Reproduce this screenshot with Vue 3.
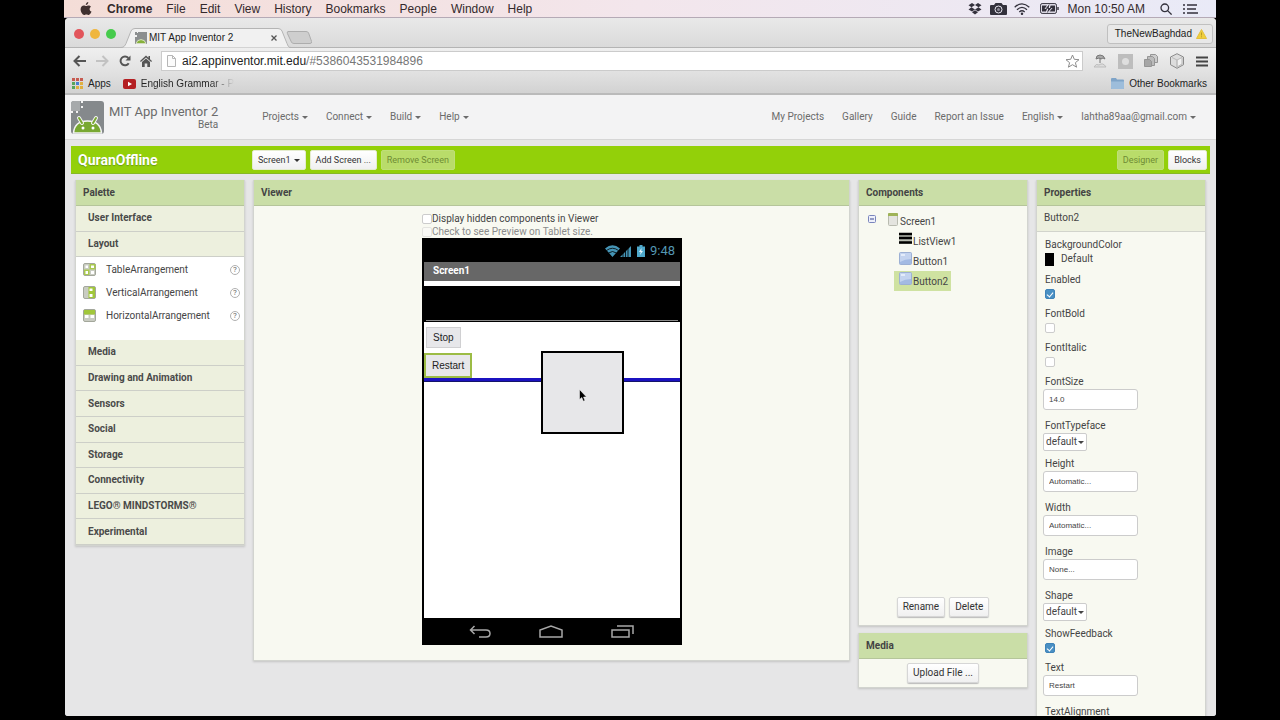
<script setup>
import { ref } from 'vue'

const menus = ['File', 'Edit', 'View', 'History', 'Bookmarks', 'People', 'Window', 'Help']
const leftNav = ['Projects', 'Connect', 'Build', 'Help']
const rightNav = [
  { label: 'My Projects' },
  { label: 'Gallery' },
  { label: 'Guide' },
  { label: 'Report an Issue' },
  { label: 'English', menu: true },
  { label: 'lahtha89aa@gmail.com', menu: true },
]
const paletteTop = ['User Interface', 'Layout']
const paletteBottom = ['Media', 'Drawing and Animation', 'Sensors', 'Social', 'Storage', 'Connectivity', 'LEGO® MINDSTORMS®', 'Experimental']
const layoutItems = [
  { name: 'TableArrangement', kind: 'table' },
  { name: 'VerticalArrangement', kind: 'vertical' },
  { name: 'HorizontalArrangement', kind: 'horizontal' },
]
const children = [
  { name: 'ListView1', kind: 'list' },
  { name: 'Button1', kind: 'button' },
  { name: 'Button2', kind: 'button', selected: true },
]
const properties = ref([
  { name: 'Enabled', type: 'check', value: true },
  { name: 'FontBold', type: 'check', value: false },
  { name: 'FontItalic', type: 'check', value: false },
  { name: 'FontSize', type: 'text', value: '14.0' },
  { name: 'FontTypeface', type: 'select', value: 'default' },
  { name: 'Height', type: 'text', value: 'Automatic...' },
  { name: 'Width', type: 'text', value: 'Automatic...' },
  { name: 'Image', type: 'text', value: 'None...' },
  { name: 'Shape', type: 'select', value: 'default' },
  { name: 'ShowFeedback', type: 'check', value: true },
  { name: 'Text', type: 'text', value: 'Restart' },
  { name: 'TextAlignment', type: 'select', value: 'center' },
])
const showHidden = ref(false)
const tabletPreview = ref(false)
const appColors = ['#c65a50', '#c65a50', '#c65a50', '#58a55c', '#4a7fd0', '#e0b040', '#58a55c', '#e0b040', '#e0b040']
</script>

<template>
  <div class="screen">
    <header class="menubar">
      <svg class="apple" width="12" height="14" viewBox="0 0 12 14"><path fill="#40302f" d="M8.3 0c.1 1.500-1 2.900-2.500 3C5.700 1.600 6.900.2 8.300 0zM8.500 3.400c.9 0 1.900.5 2.500 1.300-2 1.200-1.800 4 .5 4.900-.5 1.500-1.700 3.400-2.800 3.400-.9 0-1.200-.5-2.300-.5s-1.400.5-2.300.5C2.500 13 .6 9.900.6 7.300c0-2.500 1.600-3.900 3.200-3.900 1 0 1.800.6 2.500.6.600 0 1.300-.6 2.200-.6z"/></svg>
      <nav class="mac-menus">
        <strong>Chrome</strong>
        <span v-for="m in menus" :key="m">{{ m }}</span>
      </nav>
      <div class="status">
        <svg width="14" height="12" viewBox="0 0 14 12" fill="#33313c"><path d="M4 0l3 2-3.500 2.200L.5 2.200zM10 0l3.500 2.200-3 2L7 2zM.5 6.400l3-2.200L7 6.400 4 8.500zM7 6.400l3.500-2.200 3 2.200-3.500 2.100zM4 9.200L7 7.200l3 2L7 11.500z"/></svg>
        <svg class="camera" width="17" height="12" viewBox="0 0 17 12"><path fill="#33313c" d="M1 2h3l1.500-2h6L13 2h3q1 0 1 1v8q0 1-1 1H1q-1 0-1-1V3q0-1 1-1z"/><circle cx="8.500" cy="6.500" r="3.500" fill="none" stroke="#e8e6f0"/><circle cx="8.500" cy="6.500" r="1.500" fill="#8e8c98"/></svg>
        <svg class="wifi" width="16" height="12" viewBox="0 0 16 12" fill="none" stroke="#33313c" stroke-width="1.300"><path d="M.7 4.200Q8-2.500 15.300 4.200M3 6.700q5-4.600 10 0M5.300 9q2.700-2.400 5.400 0"/><circle cx="8" cy="10.800" r=".6" fill="#33313c"/></svg>
        <svg class="battery" width="19" height="11" viewBox="0 0 19 11"><rect x=".6" y=".6" width="15.800" height="9.800" rx="1.500" fill="none" stroke="#33313c"/><path fill="#33313c" d="M17.300 4h1.400v3h-1.400zM2 2.500h5L4.500 6H7L6 8.500H2zM10.500 2.500H15v6H9.500L12.500 5H10zM9.500 1L5.500 5.700h2.700L7 10l4.500-5H8.700z"/></svg>
        <span class="clock">Mon 10:50 AM</span>
        <svg class="find" width="12" height="12" viewBox="0 0 12 12" fill="none" stroke="#33313c" stroke-width="1.300"><circle cx="4.800" cy="4.800" r="3.800"/><path d="M7.600 7.600l4 4"/></svg>
        <svg width="15" height="10" viewBox="0 0 15 10" stroke="#33313c" stroke-width="1.500"><path d="M0 1h2M4 1h10M0 5h2M4 5h9M0 9h2M4 9h11"/></svg>
      </div>
    </header>

    <div class="browser">
      <div class="tabstrip">
        <div class="lights"><i class="red"></i><i class="yellow"></i><i class="green"></i></div>
        <div class="tab">
          <svg class="tab-shape" width="170" height="20" viewBox="0 0 170 20"><path d="M0 19.500c3 0 4-2 5-4L10 3q1-2.500 4-2.500h143q3 0 4 2.500l5 12.500c1 2 1 4 4 4" fill="#f1f1f1" stroke="#b4b4b4"/></svg>
          <svg class="favicon" width="12" height="12" viewBox="0 0 12 12"><path fill="#8c8f90" d="M0 0h2v1h1V0h9v12H0V5h2V3H0z"/><path fill="#86b13a" stroke="#eef2e2" stroke-width=".8" d="M1 11.600q1-4 5-4t5 4z"/></svg>
          <span>MIT App Inventor 2</span>
          <button class="tab-close" aria-label="Close tab"><svg width="6" height="6" viewBox="0 0 6 6"><path d="M.5.5l5 5M5.500.5l-5 5" stroke="#555" stroke-width="1.300"/></svg></button>
        </div>
        <svg class="newtab" width="26" height="13" viewBox="0 0 26 13"><path d="M2 .5h18q2 0 2.600 1.500l3 8.500q.4 2-1.600 2H8q-2 0-2.600-1.500l-4-8.500Q.8.500 2 .5z" fill="#cecece" stroke="#adadad"/></svg>
        <button class="profile">TheNewBaghdad
          <svg width="11" height="10" viewBox="0 0 11 10"><path d="M5.500.5l5 9H.5z" fill="#f0cf3c" stroke="#e3bf3d"/><path d="M5.500 3.500v3M5.500 7.300v1" stroke="#b99a24"/></svg>
        </button>
      </div>

      <div class="toolbar">
        <button aria-label="Back"><svg width="13" height="12" viewBox="0 0 13 12" fill="none" stroke="#555" stroke-width="2"><path d="M13 6H2M6.500 1L1.500 6l5 5"/></svg></button>
        <button aria-label="Forward"><svg width="13" height="12" viewBox="0 0 13 12" fill="none" stroke="#c2c2c2" stroke-width="2"><path d="M0 6h11M6.500 1l5 5-5 5"/></svg></button>
        <button aria-label="Reload"><svg width="12" height="12" viewBox="0 0 12 12"><path d="M9.700 8.200A4.400 4.400 0 1 1 9.300 3" fill="none" stroke="#555" stroke-width="2"/><path fill="#555" d="M11.500.5v5h-5z"/></svg></button>
        <button aria-label="Home"><svg width="12" height="12" viewBox="0 0 12 12" fill="#555"><path d="M6 .5l2.500 2.300V1H10v3.200L12 6l-.8 1-5.200-4.600L.8 7 0 6zM2 7l4-3.500L10 7v5H7.300V8.500H4.700V12H2z"/></svg></button>
        <div class="omnibox">
          <svg width="9" height="12" viewBox="0 0 9 12"><path d="M.5.5h5l3 3v8h-8zM5.500.5v3h3" fill="#fbfbfb" stroke="#b6b6b6"/></svg>
          <span class="url" role="textbox" aria-label="Address"><b>ai2.appinventor.mit.edu</b>/#5386043531984896</span>
          <svg width="15" height="14" viewBox="0 0 15 14"><path d="M7.500 1l1.800 4.300 4.700.4-3.600 3 1.200 4.500-4.100-2.500-4.100 2.500 1.200-4.500L1 5.700l4.700-.4z" fill="#fff" stroke="#8c8c8c"/></svg>
        </div>
        <div class="extensions">
          <svg width="14" height="14" viewBox="0 0 14 14"><path d="M3 5q0-4 4-4t5 4l-2-1-2 1-2-1zM7 4v5" fill="#aaa" stroke="#777"/><path d="M1 13q2-4 5-2 4-3 7 2z" fill="#ddd" stroke="#bbb"/></svg>
          <svg width="15" height="15" viewBox="0 0 15 15"><path fill="#bdbdbd" d="M0 0h15v15H0z"/><circle cx="7.500" cy="7.500" r="3.500" fill="#dedede"/></svg>
          <svg width="14" height="14" viewBox="0 0 14 14" stroke="#959595"><path fill="#ccc" d="M6.500.5h5l2 2v6h-7z"/><path fill="#bbb" d="M3.500 2.500h5l2 2v7h-7z"/><path fill="#a6a6a6" d="M.5 5.500h5l2 2v5h-7z"/></svg>
          <svg width="16" height="16" viewBox="0 0 16 16" stroke="#8a8a8a"><path fill="#ddd" d="M8 .7l6.500 3.300v7.700L8 15.300l-6.500-3.600V4z"/><path fill="#f2f2f2" d="M8 7l5-2.500v6.500l-5 3z" stroke="#bbb"/><path d="M3 4.500L8 7v7" fill="none" stroke="#bbb"/></svg>
          <svg width="12" height="11" viewBox="0 0 12 11" stroke="#444" stroke-width="2"><path d="M0 1.500h12M0 5.500h12M0 9.500h12"/></svg>
        </div>
      </div>

      <div class="bookmarks">
        <svg width="11" height="11" viewBox="0 0 11 11"><rect v-for="(c, i) in appColors" :key="i" :x="(i % 3) * 4" :y="Math.floor(i / 3) * 4" width="3" height="3" :fill="c"/></svg>
        <span>Apps</span>
        <svg class="yt" width="13" height="10" viewBox="0 0 13 10"><rect width="13" height="10" rx="2" fill="#b41f22"/><path fill="#fff" d="M5 2.700l4 2.300-4 2.300z"/></svg>
        <span class="fade">English Grammar - P</span>
        <svg class="folder" width="13" height="11" viewBox="0 0 13 11"><path fill="#7fa4c8" d="M0 1q0-1 1-1h4l1 1.500h6q1 0 1 1V10q0 1-1 1H1q-1 0-1-1z"/><path fill="#9dbddb" d="M0 3.500h13V10q0 1-1 1H1q-1 0-1-1z"/></svg>
        <span>Other Bookmarks</span>
      </div>

      <div class="page">
        <header class="site-head">
          <svg width="33" height="33" viewBox="0 0 33 33"><rect width="33" height="33" rx="3" fill="#85898c"/><path d="M0 3q0-3 3-3h6v10H0z" fill="#a6a9ab"/><path d="M11 0v2M11 5v2M0 11h2M5 11h2" stroke="#f3f3f3" stroke-width="2" fill="none"/><path d="M2.500 32q1-12 14-12t14 12z" fill="#79a832" stroke="#f3f3f3" stroke-width="1.500"/><path d="M8 17l3 5M25 17l-3 5" stroke="#f3f3f3" stroke-width="4" stroke-linecap="round"/><path d="M8 17l3 5M25 17l-3 5" stroke="#79a832" stroke-width="2" stroke-linecap="round"/><circle cx="12" cy="27" r="1.500" fill="#fff"/><circle cx="22" cy="27" r="1.500" fill="#fff"/></svg>
          <div class="brand"><span class="brand-name">MIT App Inventor 2</span><span>Beta</span></div>
          <nav class="nav left">
            <button v-for="n in leftNav" :key="n">{{ n }}<i class="caret"></i></button>
          </nav>
          <nav class="nav right">
            <template v-for="n in rightNav" :key="n.label">
              <button v-if="n.menu">{{ n.label }}<i class="caret"></i></button>
              <a v-else href="#">{{ n.label }}</a>
            </template>
          </nav>
        </header>

        <div class="project-bar">
          <h1>QuranOffline</h1>
          <button class="btn">Screen1<i class="caret"></i></button>
          <button class="btn">Add Screen ...</button>
          <button class="btn off" disabled>Remove Screen</button>
          <button class="btn off designer" disabled>Designer</button>
          <button class="btn">Blocks</button>
        </div>

        <main class="columns">
          <section class="panel">
            <h2>Palette</h2>
            <div class="group two">
              <button v-for="p in paletteTop" :key="p">{{ p }}</button>
            </div>
            <ul class="items">
              <li v-for="it in layoutItems" :key="it.name">
                <svg width="13" height="13" viewBox="0 0 13 13">
                  <rect x=".5" y=".5" width="12" height="12" rx="1.500" fill="#c9ccc2" stroke="#a3a79b"/>
                  <g v-if="it.kind === 'table'"><path fill="#a9c94e" d="M6.500 1h6v5.500h-6zM1 6.500h5.500V12H1z"/><path fill="#fff" d="M2.500 2.500h2.500V5H2.500zM8 2.500h3V5H8zM2.500 8H5v3H2.500zM8 8h3v3H8z"/></g>
                  <g v-else-if="it.kind === 'vertical'"><path fill="#a1c73a" d="M5.500 1H12v11H5.500z"/><path fill="#fff" d="M6.500 2.500h3V5h-3zM6.500 8h3v3h-3z"/></g>
                  <g v-else><path fill="#a1c73a" d="M1 1h11v4.500H1z"/><path fill="#fff" d="M2 6h3.500v3H2zM7.500 6H11v3H7.500z"/></g>
                </svg>
                <span>{{ it.name }}</span>
                <button class="help" :aria-label="'About ' + it.name">?</button>
              </li>
            </ul>
            <div class="group eight">
              <button v-for="p in paletteBottom" :key="p">{{ p }}</button>
            </div>
          </section>

          <section class="panel">
            <h2>Viewer</h2>
            <div class="viewer">
              <div class="device">
                <label class="view-opt"><input v-model="showHidden" type="checkbox">Display hidden components in Viewer</label>
                <label class="view-opt dim"><input v-model="tabletPreview" type="checkbox">Check to see Preview on Tablet size.</label>
                <div class="phone">
                  <div class="phone-status">
                    <svg width="27" height="12" viewBox="0 0 27 12"><path fill="#4594b5" d="M0 3.500Q7.500-3 15 3.500L7.500 12zM15 12l11-11v11z"/><path d="M1.500 5.500q6-4.500 12 0M3.500 8q4-3 8 0M18 12V5M20.500 12V3M23 12V1" stroke="#000" stroke-width=".8" fill="none"/></svg>
                    <svg width="8" height="12" viewBox="0 0 8 12"><path fill="#4fa9cc" d="M2.500 0h3v1.500H8V12H0V1.500h2.500z"/><path fill="#e8f6fb" d="M4.500 3L2 7h1.700L3 10l3-4H4.300z"/></svg>
                    <span>9:48</span>
                  </div>
                  <div class="phone-title">Screen1</div>
                  <div class="phone-list"></div>
                  <div class="phone-body">
                    <button class="pbtn">Stop</button>
                    <button class="pbtn selected">Restart</button>
                    <div class="drop-line"></div>
                    <div class="drag-box">
                      <svg width="8" height="13" viewBox="0 0 8 13"><path d="M.5.500v10l2.300-2 1.500 3.700 1.700-.7-1.500-3.500h3z" fill="#000" stroke="#fff" stroke-width=".5"/></svg>
                    </div>
                  </div>
                  <div class="phone-nav">
                    <svg width="22" height="13" viewBox="0 0 22 13"><path d="M5.500 1l-4 4 4 4M1.500 5H17q4 0 4 3.500T17 12h-7"/></svg>
                    <svg width="24" height="13" viewBox="0 0 24 13"><path d="M1 12V5l11-4 11 4v7z"/></svg>
                    <svg width="24" height="13" viewBox="0 0 24 13"><path d="M1 5h17v7H1zM6 1h16v8"/></svg>
                  </div>
                </div>
              </div>
            </div>
          </section>

          <div class="stack">
            <section class="panel">
              <h2>Components</h2>
              <div class="components">
                <div class="tree">
                  <div class="root">
                    <button class="toggle" aria-label="Collapse Screen1"><svg width="8" height="8" viewBox="0 0 8 8"><rect x=".5" y=".5" width="7" height="7" rx="1" fill="#eef0fa" stroke="#7a85bd"/><path d="M2 4h4" stroke="#39478f"/></svg></button>
                    <svg class="root-icon" width="10" height="13" viewBox="0 0 10 13"><rect x=".5" y=".5" width="9" height="12" rx="1" fill="#e4e4df" stroke="#b9bbb0"/><path fill="#9fb357" d="M0 1q0-1 1-1h8q1 0 1 1v2H0z"/></svg>
                    <span>Screen1</span>
                  </div>
                  <div v-for="c in children" :key="c.name" class="leaf" :class="{ chosen: c.selected }">
                    <svg v-if="c.kind === 'list'" width="13" height="13" viewBox="0 0 13 13"><path fill="#b9bdb2" d="M0 1h13v11H0z"/><path d="M0 2h13M0 6h13M0 10.500h13" stroke="#000" stroke-width="2.500"/></svg>
                    <svg v-else width="13" height="13" viewBox="0 0 13 13"><rect x=".5" y=".5" width="12" height="12" rx="1" fill="#a3bae3" stroke="#9cb0d4"/><path fill="#c3d3ef" d="M1 1h11v6q-6 0-11 3z"/><path fill="#e3ecfa" d="M2 2h4v2H2z"/></svg>
                    <span>{{ c.name }}</span>
                  </div>
                </div>
                <div class="actions"><button class="btn">Rename</button><button class="btn">Delete</button></div>
              </div>
            </section>
            <section class="panel">
              <h2>Media</h2>
              <div class="media"><button class="btn">Upload File ...</button></div>
            </section>
          </div>

          <section class="panel props">
            <h2>Properties</h2>
            <div class="subject">Button2</div>
            <div class="prop-list">
              <div class="prop color">
                <span>BackgroundColor</span>
                <button class="swatch"><i></i>Default</button>
              </div>
              <div v-for="p in properties" :key="p.name" class="prop" :class="p.type">
                <label :for="'prop-' + p.name">{{ p.name }}</label>
                <input v-if="p.type === 'check'" :id="'prop-' + p.name" v-model="p.value" type="checkbox">
                <input v-else-if="p.type === 'text'" :id="'prop-' + p.name" v-model="p.value" type="text">
                <div v-else class="pick">
                  <select :id="'prop-' + p.name" v-model="p.value"><option>{{ p.value }}</option></select>
                  <i class="caret"></i>
                </div>
              </div>
            </div>
          </section>
        </main>
      </div>
    </div>
  </div>
</template>

<style>
html, body { background: #000; }
</style>

<style scoped>
* { box-sizing: border-box; }
.screen {
  display: flex;
  flex-direction: column;
  height: 100vh;
  padding: 0 5% 4px;
  overflow: hidden;
  background: #000;
  font: 10px/14px Roboto, "Liberation Sans", sans-serif;
  color: #454545;
}
button, input, select { margin: 0; padding: 0; border: 0; background: none; font: inherit; color: inherit; }
h1, h2, ul { margin: 0; padding: 0; }
svg { display: block; flex: none; }
a { color: inherit; text-decoration: none; }

.menubar {
  display: flex;
  align-items: center;
  flex: none;
  height: 18px;
  padding: 0 18px 0 16px;
  background: linear-gradient(90deg, #f4ddd7, #f3e6ec 50%, #e9eaf7);
  border-bottom: 1px solid #b5aab6;
  font: 12px/16px "Liberation Sans", sans-serif;
  color: #33292c;
}
.mac-menus { display: flex; gap: 14px; margin-left: 15px; }
.status { display: flex; align-items: center; margin-left: auto; }
.camera { margin-left: 8px; }
.wifi { margin-left: 7px; }
.battery { margin-left: 10px; }
.clock { margin: 0 15px 0 9px; }
.find { margin-right: 11px; }

.browser {
  display: flex;
  flex-direction: column;
  flex: 1;
  min-height: 0;
  margin-left: 1px;
  border-radius: 4px 4px 3px 3px;
  overflow: hidden;
  background: #e0e0e0;
}
.tabstrip {
  display: flex;
  align-items: flex-end;
  flex: none;
  height: 30px;
  padding-right: 3px;
  background: linear-gradient(#e9e9e9, #dadada);
  border-bottom: 1px solid #b4b4b4;
  font: 10px/14px "Liberation Sans", sans-serif;
  color: #222;
}
.lights { display: flex; gap: 6px; align-self: center; margin: 2px 0 0 9px; }
.lights i { width: 10px; height: 10px; border-radius: 50%; }
.red { background: #e2555b; }
.yellow { background: #efb63e; }
.green { background: #46cb4c; }
.tab { position: relative; display: flex; align-items: center; height: 20px; width: 170px; margin: 0 0 -1px 5px; padding: 0 14px; }
.tab-shape { position: absolute; inset: 0; }
.tab span, .favicon { position: relative; }
.tab span { margin-left: 2px; }
.tab-close { position: relative; margin-left: auto; }
.newtab { margin: 0 0 3px -5px; align-self: flex-end; }
.profile {
  display: flex;
  align-items: center;
  gap: 4px;
  height: 20px;
  margin: 0 0 3px auto;
  padding: 0 5px 0 7px;
  border: 1px solid #c0c0c0;
  border-radius: 3px;
  background: #e8e8e8;
}
.toolbar { display: flex; align-items: center; flex: none; height: 26px; padding: 0 8px; gap: 10px; background: linear-gradient(#efefef, #e0e0e0); }
.toolbar button:nth-child(n+3) { margin-right: -1px; }
.omnibox {
  display: flex;
  align-items: center;
  flex: 1;
  height: 20px;
  padding: 0 2px 0 5px;
  background: #fff;
  border: 1px solid #cbcbcb;
}
.url { flex: 1; margin-left: 6px; font: 12px/16px "Liberation Sans", sans-serif; color: #777; }
.url b { font-weight: 400; color: #222; }
.extensions { display: flex; align-items: center; gap: 11px; }
.bookmarks {
  display: flex;
  align-items: center;
  flex: none;
  height: 21px;
  padding: 0 9px 0 7px;
  background: linear-gradient(#e0e0e0, #d2d2d2);
  border-bottom: 2px solid #bababa;
  font: 10px/14px "Liberation Sans", sans-serif;
  color: #222;
}
.bookmarks span { margin-left: 5px; }
.yt { margin-left: 12px; }
.fade { background: linear-gradient(90deg, #222 75%, #d8d8d8); background-clip: text; color: transparent; }
.folder { margin-left: auto; }

.page { flex: 1; min-height: 0; overflow: hidden; background: #e6e6e7; }
.site-head { display: flex; align-items: center; height: 45px; padding: 0 20px 0 6px; background: #f3f3f4; border-bottom: 1px solid #d6d6d6; color: #6b6b6b; }
.brand { display: flex; flex-direction: column; align-items: flex-end; margin-left: 5px; line-height: 12px; }
.brand-name { font-size: 13px; line-height: 15px; }
.nav { display: flex; gap: 18px; }
.nav.left { margin-left: 44px; }
.nav.right { margin-left: auto; }
.caret { display: inline-block; margin-left: 3px; border: 3px solid transparent; border-top-color: currentColor; border-bottom: 0; vertical-align: middle; }

.project-bar {
  display: flex;
  align-items: center;
  gap: 4px;
  height: 28px;
  margin: 6px 6px 6px;
  padding: 0 3px 0 7px;
  background: #93d009;
  border-bottom: 1px solid #86b824;
}
h1 { width: 170px; font: 700 14px/18px Roboto, sans-serif; color: #fff; text-shadow: 0 1px 1px #6d9a16; }
.btn {
  height: 20px;
  padding: 0 5px;
  border: 1px solid #d6d6d6;
  border-radius: 2px;
  background: linear-gradient(#fff, #f0f0f0);
  box-shadow: 0 1px 1px #bbb;
  color: #333;
}
.project-bar .btn { border-color: #e4eccf; box-shadow: none; font-size: 9px; }
.project-bar .off { background: #b9dc6a; border-color: #bfdf78; color: #6f8c34; }
.project-bar .designer { margin-left: auto; }

.columns { display: grid; grid-template-columns: 170px minmax(280px, 1fr) 170px 170px; gap: 8px; align-items: start; padding: 0 10px; }
.panel { background: #f8f9f1; border: 1px solid #d2d4cf; border-top: 0; box-shadow: 0 1px 2px #c4c4c4; }
h2 { height: 26px; padding: 0 7px; background: #cadea7; border-bottom: 1px solid #b5c59a; font: 700 10px/25px Roboto, sans-serif; color: #444; }
.group { display: grid; grid-auto-rows: 1fr; }
.two { height: 51px; }
.eight { height: 205px; }
.group button { padding: 0 12px; border-bottom: 1px solid #cdcfc8; background: #edf0de; text-align: left; font-weight: 700; color: #4a4a4a; }
.items { height: 83px; padding: 1px 4px 0 7px; background: #fff; list-style: none; }
.items li { display: flex; align-items: center; height: 23px; }
.items span { margin-left: 10px; }
.help { width: 10px; height: 10px; margin-left: auto; border: 1px solid #b0b0b0; border-radius: 50%; font-size: 8px; line-height: 8px; color: #666; }

.viewer { display: flex; justify-content: center; height: 454px; padding-top: 6px; }
.device { width: 260px; margin-left: 1px; }
.view-opt { display: flex; align-items: center; height: 14px; }
.dim { height: 12px; color: #8b8b8b; }
input[type="checkbox"] { appearance: none; width: 10px; height: 10px; border: 1px solid #ccc; border-radius: 2px; background: #fff; }
input[type="checkbox"]:checked { display: grid; place-items: center; border-color: #3f83b8; background: #4a90c4; }
input[type="checkbox"]:checked::after { content: ""; width: 3px; height: 5px; margin-bottom: 1px; border: solid #fff; border-width: 0 1px 1px 0; transform: rotate(40deg); }
.dim input[type="checkbox"] { border-color: #e4e4e0; background: #fafaf6; }
.phone { height: 407px; display: flex; flex-direction: column; border: 2px solid #000; background: #fff; }
.phone-status { display: flex; align-items: center; justify-content: flex-end; gap: 5px; height: 22px; padding-right: 5px; background: #000; font-size: 13px; color: #5497b2; }
.phone-title { height: 19px; padding-left: 9px; background: #676767; font-weight: 700; line-height: 18px; color: #fff; }
.phone-list { display: flex; height: 36px; margin-top: 5px; padding: 0 2px 1px; background: #000; }
.phone-list::after { content: ""; flex: 1; border-bottom: 1px solid #8a8a8a; }
.phone-body { position: relative; display: flex; flex-direction: column; align-items: flex-start; flex: 1; padding-top: 5px; }
.pbtn { height: 21px; margin: 0 0 5px 2px; padding: 0 6px; border: 1px solid #d0d0d2; background: #e7e7ea; font: 10px/14px "Liberation Sans", sans-serif; color: #222; }
.pbtn.selected { height: 25px; margin: 0; border: 2px solid #9cbc45; }
.drop-line { width: 100%; height: 4px; background: #1b12c0; border-bottom: 1px solid #14146a; }
.drag-box { position: absolute; left: 117px; top: 29px; display: grid; width: 83px; height: 83px; padding: 36px; border: 2px solid #000; background: #e7e7e9; }
.phone-nav { display: flex; align-items: center; justify-content: center; gap: 48px; height: 25px; padding-top: 2px; background: #000; }
.phone-nav path { fill: none; stroke: #a8a8a8; stroke-width: 1.500; }

.stack { display: grid; gap: 7px; }
.components { display: flex; flex-direction: column; justify-content: space-between; height: 419px; padding: 6px 9px 8px; }
.root { display: flex; height: 19px; }
.toggle { align-self: flex-start; margin-top: 3px; }
.root-icon { margin: 1px 2px 0 12px; }
.root span, .leaf span { padding-top: 3px; }
.leaf { display: flex; width: max-content; height: 20px; margin-left: 26px; padding: 1px 3px 0 5px; }
.leaf span { margin-left: 1px; }
.chosen { background: #cfe2a1; }
.actions { display: flex; justify-content: center; gap: 4px; }
.media { display: flex; justify-content: center; padding: 4px 0; }

.subject { height: 26px; padding: 5px 7px; background: #edf0de; border-bottom: 1px solid #d2d4cc; }
.prop-list { padding: 6px 7px 40px; }
.prop { display: flex; flex-direction: column; align-items: flex-start; padding-left: 1px; }
.color { height: 35px; }
.swatch { display: flex; align-items: center; gap: 7px; }
.swatch i { width: 9px; height: 13px; background: #000; }
.check { height: 34px; }
.check input { margin-top: 2px; }
.text { height: 44px; }
.text input { width: 95px; height: 21px; padding: 0 5px; border: 1px solid #ccc; border-radius: 3px; background: #fff; font: 8px/12px "Liberation Sans", sans-serif; margin-left: -2px; }
.select { height: 38px; }
.pick { position: relative; display: flex; align-items: center; margin-left: -2px; }
.pick select { appearance: none; width: 44px; height: 18px; padding-left: 2px; border: 1px solid #ccc; border-radius: 2px; background: #fff; }
.pick .caret { position: absolute; right: 3px; pointer-events: none; }
</style>
